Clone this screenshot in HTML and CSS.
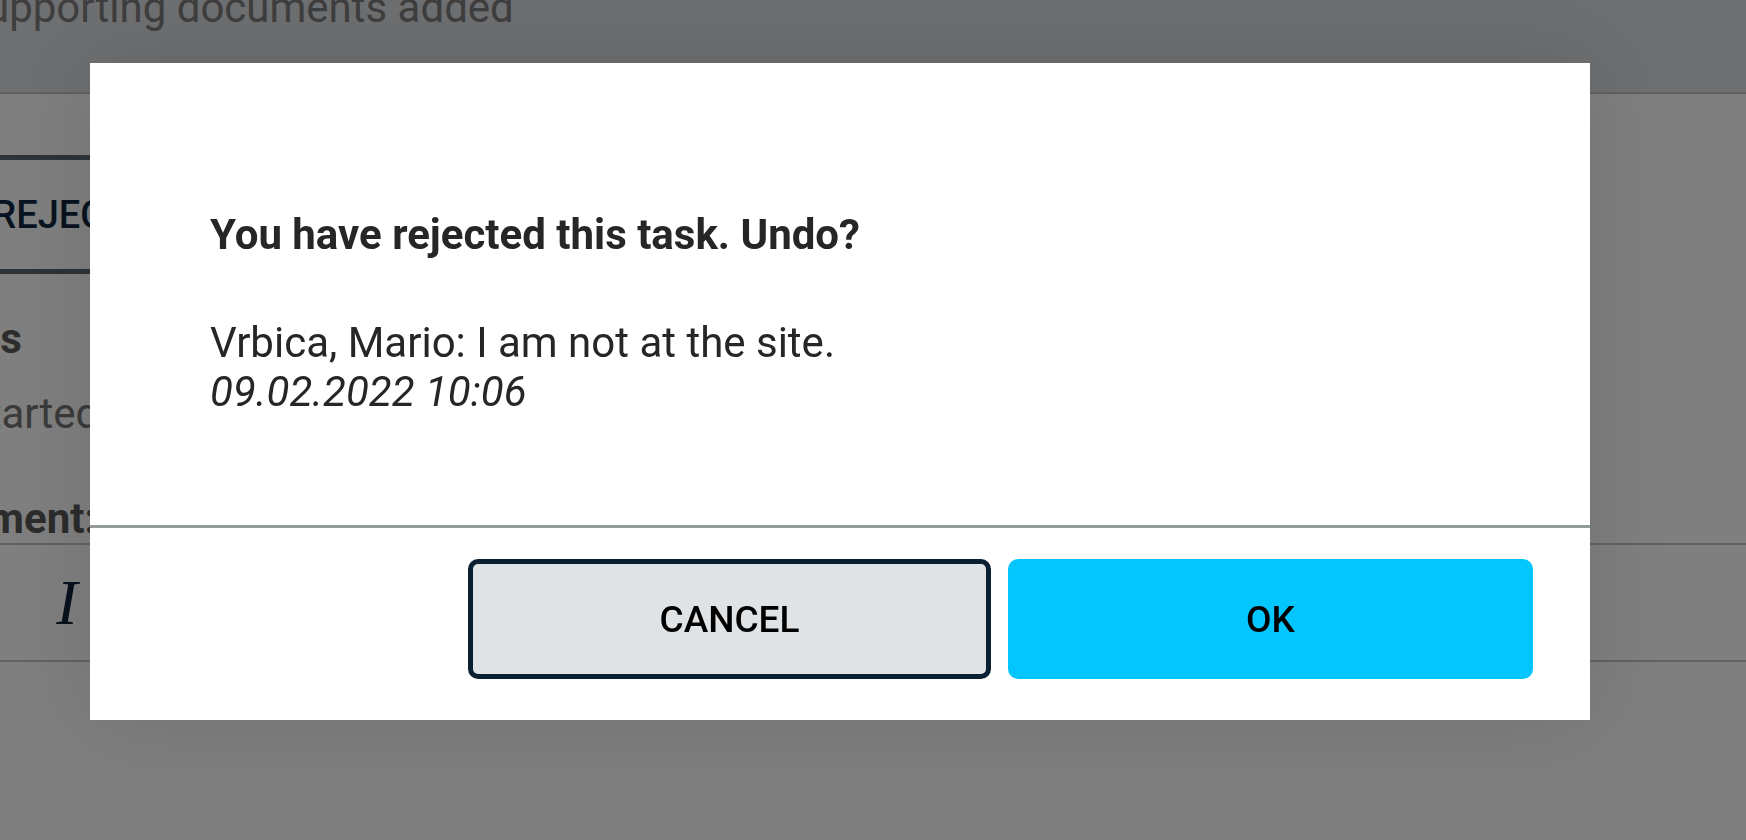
FILE: index.html
```html
<!DOCTYPE html>
<html lang="en">
<head>
    <meta charset="UTF-8">
    <meta name="viewport" content="width=device-width, initial-scale=1.0">
    <title>Task</title>
    <link rel="stylesheet" href="styles.css">
</head>
<body>
    <div class="page">
        <header class="page-header">
            <p class="summary">No supporting documents added</p>
        </header>
        <main class="task">
            <div class="actions">
                <button class="btn-reject">REJECT</button>
            </div>
            <p class="label">Status</p>
            <p class="value">Not started</p>
            <p class="label">Comment:</p>
            <div class="toolbar">
                <span class="tool">B</span>
                <span class="tool tool-italic">I</span>
                <span class="tool tool-underline">U</span>
            </div>
            <div class="editor"></div>
        </main>
    </div>

    <div class="overlay" id="overlay">
        <div class="dialog" id="dialog">
            <div class="dialog-body">
                <h2 class="dialog-title">You have rejected this task. Undo?</h2>
                <p class="dialog-message">Vrbica, Mario: I am not at the site.<br><em>09.02.2022 10:06</em></p>
            </div>
            <div class="dialog-footer">
                <button class="btn btn-cancel">CANCEL</button>
                <button class="btn btn-ok">OK</button>
            </div>
        </div>
    </div>
</body>
</html>
```

FILE: styles.css
```css
body {
    font-family: Roboto, "Noto Sans", sans-serif;
    background-color: #fff;
    margin: 0;
    height: 840px;
    overflow: hidden;
}
p {
    margin: 0;
}

/* page behind the dialog (scrolled a little) */
.page {
    margin: -40px 0 0 -100px;
}
.page-header {
    background-color: #dcdee2;
    padding: 23px 0 60px 0;
    border-bottom: 2px solid #bec0c4;
}
.summary {
    font-size: 42px;
    line-height: 49px;
    color: #7c7c7c;
}
.task {
    padding-top: 61px;
}
.btn-reject {
    display: block;
    width: 320px;
    height: 119px;
    border: 5px solid #5c6670;
    border-radius: 10px;
    background-color: #fff;
    font-family: Roboto, sans-serif;
    font-size: 38px;
    font-weight: 500;
    color: #0f2740;
}
.label {
    margin-top: 40px;
    font-size: 42px;
    line-height: 49px;
    font-weight: 700;
    color: #585858;
}
.label + .value + .label {
    margin-top: 56px;
}
.value {
    margin-top: 26px;
    margin-left: -12px;
    font-size: 42px;
    line-height: 49px;
    color: #747474;
}
.toolbar {
    display: flex;
    align-items: center;
    height: 115px;
    padding-left: 32px;
    border-top: 2px solid #c6c6c6;
    border-bottom: 2px solid #c6c6c6;
}
.tool {
    width: 90px;
    text-align: center;
    font-family: "Liberation Serif", serif;
    font-size: 64px;
    line-height: 1;
    color: #102238;
}
.tool-italic {
    font-style: italic;
}
.tool-underline {
    text-decoration: underline;
}

/* dialog */
.overlay {
    position: fixed;
    left: 0;
    top: 0;
    width: 100%;
    height: 100%;
    box-sizing: border-box;
    padding: 63px 0 0 90px;
    background-color: rgba(0, 0, 0, 0.5);
    display: flex;
    align-items: flex-start;
}
.dialog {
    width: 1500px;
    background-color: #fff;
    box-shadow: 0 0 90px rgba(0, 0, 0, 0.12);
}
.dialog-body {
    padding: 147px 120px 109px;
}
.dialog-title {
    margin: 0;
    font-size: 42px;
    line-height: 49px;
    font-weight: 700;
    color: #262626;
}
.dialog-message {
    margin-top: 59px;
    font-size: 42px;
    line-height: 49px;
    color: #262626;
}
.dialog-footer {
    display: flex;
    justify-content: flex-end;
    gap: 17px;
    padding: 31px 57px 41px;
    border-top: 3px solid #939b9d;
}
.btn {
    box-sizing: border-box;
    height: 120px;
    border-radius: 10px;
    font-family: Roboto, sans-serif;
    font-size: 37px;
    font-weight: 500;
    color: #000;
    cursor: pointer;
}
.btn-cancel {
    width: 523px;
    background-color: #e0e3e6;
    border: 5px solid #0b1f33;
}
.btn-ok {
    width: 525px;
    background-color: #03c6ff;
    border: none;
}
```
